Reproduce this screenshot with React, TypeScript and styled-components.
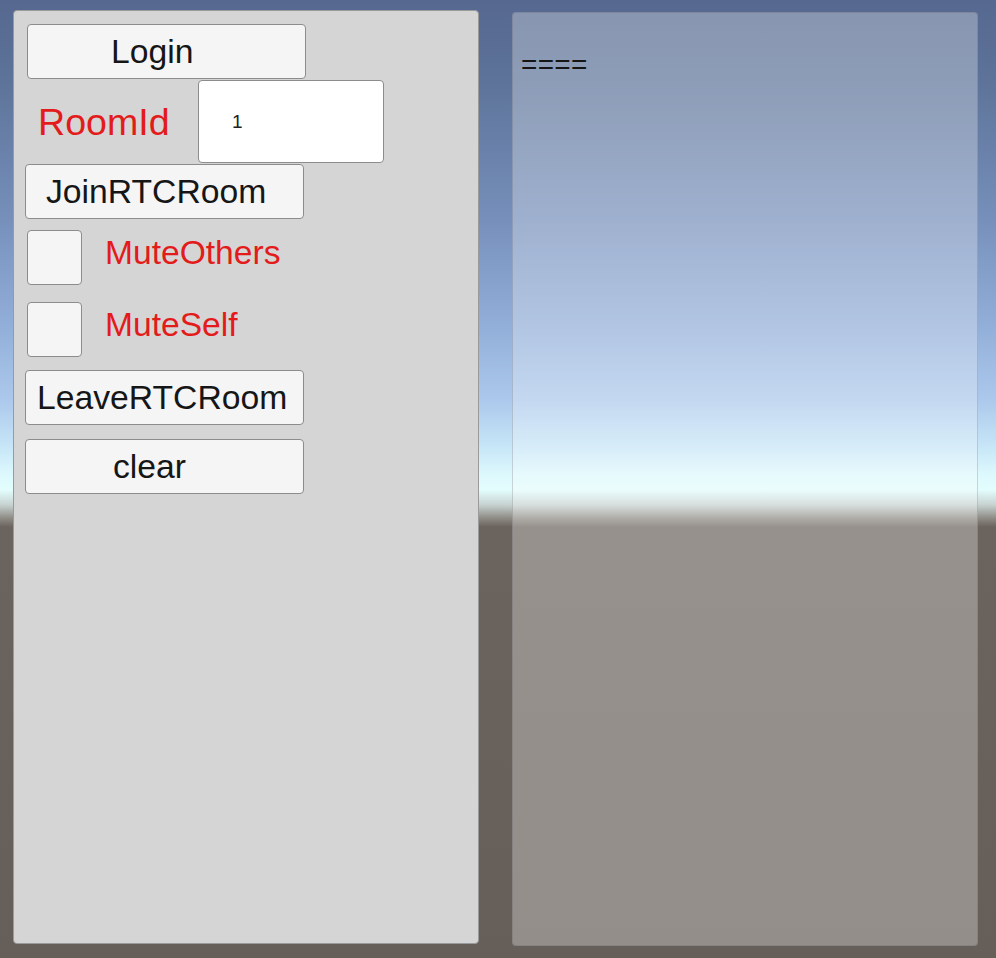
import React from "react";
import styled, { createGlobalStyle } from "styled-components";

const Global = createGlobalStyle`
  html, body {
    margin: 0;
    padding: 0;
    width: 996px;
    height: 958px;
    overflow: hidden;
  }
  body {
    font-family: "Liberation Sans", Arial, sans-serif;
    background: linear-gradient(
      to bottom,
      #566890 0px,
      #5d7399 80px,
      #7690bb 220px,
      #93b0da 330px,
      #acc8ec 400px,
      #c9e8f8 450px,
      #def9fd 475px,
      #e3fdfd 490px,
      #c6d2d0 505px,
      #8f8c86 518px,
      #6b635d 527px,
      #665f59 958px
    );
  }
`;

const Stage = styled.div`
  display: flex;
  align-items: flex-start;
  gap: 33px;
  padding: 10px 0 0 13px;
  height: 958px;
  box-sizing: border-box;
`;

const LeftPanel = styled.div`
  width: 466px;
  height: 934px;
  box-sizing: border-box;
  background: #d5d5d5;
  border: 1px solid #9a9a9a;
  border-radius: 4px;
  display: flex;
  flex-direction: column;
  align-items: flex-start;
`;

const RightPanel = styled.div`
  margin-top: 2px;
  width: 466px;
  height: 934px;
  box-sizing: border-box;
  background: rgba(252, 252, 252, 0.3);
  border: 1px solid rgba(90, 90, 100, 0.25);
  border-radius: 4px;
  padding: 38px 0 0 8px;
`;

const LogText = styled.div`
  font-size: 28px;
  line-height: 28px;
  color: #151515;
  letter-spacing: 0.3px;
`;

const Button = styled.button<{ $mt: number; $ml: number; $pl: number }>`
  margin: ${(p) => p.$mt}px 0 0 ${(p) => p.$ml}px;
  width: 279px;
  height: 55px;
  box-sizing: border-box;
  background: #f5f5f5;
  border: 1px solid #8c8c8c;
  border-radius: 4px;
  padding: 0 0 0 ${(p) => p.$pl}px;
  text-align: left;
  font-family: "Liberation Sans", Arial, sans-serif;
  font-size: 33.7px;
  line-height: 53px;
  color: #161616;
  white-space: nowrap;
  cursor: pointer;
`;

const Row = styled.div<{ $mt: number; $ml: number }>`
  margin: ${(p) => p.$mt}px 0 0 ${(p) => p.$ml}px;
  display: flex;
  align-items: center;
`;

const RoomLabel = styled.span`
  font-size: 37.6px;
  line-height: 40px;
  color: #e31b1b;
  width: 160px;
`;

const Input = styled.div`
  width: 186px;
  height: 83px;
  box-sizing: border-box;
  background: #ffffff;
  border: 1px solid #8c8c8c;
  border-radius: 4px;
  display: flex;
  align-items: center;
  padding-left: 33px;
  font-size: 19px;
  color: #222;
`;

const Check = styled.div`
  width: 55px;
  height: 55px;
  box-sizing: border-box;
  background: #f5f5f5;
  border: 1px solid #8c8c8c;
  border-radius: 4px;
`;

const CheckLabel = styled.span`
  margin-left: 23px;
  margin-bottom: 10px;
  font-size: 33.6px;
  line-height: 40px;
  color: #e31b1b;
`;

export default function App() {
  return (
    <>
      <Global />
      <Stage>
        <LeftPanel>
          <Button $mt={13} $ml={13} $pl={83}>Login</Button>
          <Row $mt={1} $ml={24}>
            <RoomLabel>RoomId</RoomLabel>
            <Input>1</Input>
          </Row>
          <Button $mt={1} $ml={11} $pl={20}>JoinRTCRoom</Button>
          <Row $mt={11} $ml={13}>
            <Check />
            <CheckLabel>MuteOthers</CheckLabel>
          </Row>
          <Row $mt={17} $ml={13}>
            <Check />
            <CheckLabel>MuteSelf</CheckLabel>
          </Row>
          <Button $mt={13} $ml={11} $pl={11}>LeaveRTCRoom</Button>
          <Button $mt={14} $ml={11} $pl={87}>clear</Button>
        </LeftPanel>
        <RightPanel>
          <LogText>====</LogText>
        </RightPanel>
      </Stage>
    </>
  );
}
